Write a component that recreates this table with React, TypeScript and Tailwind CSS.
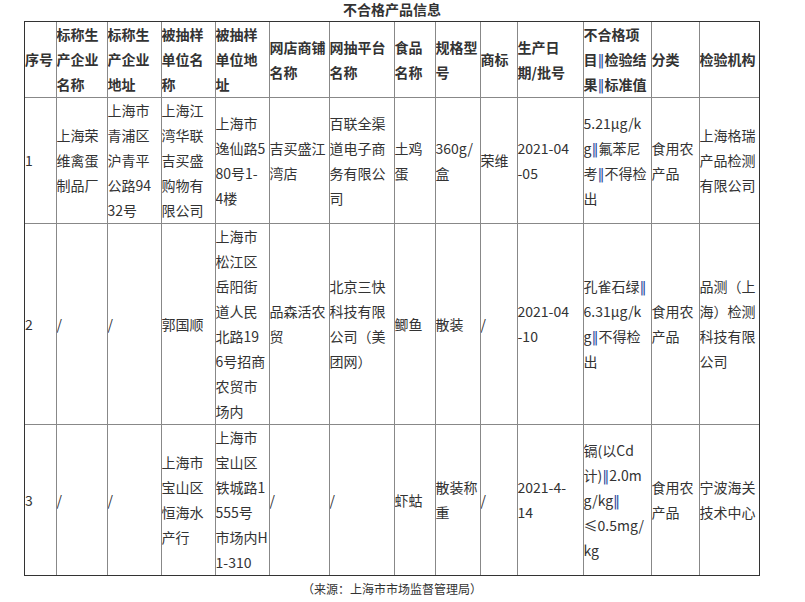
import React from "react";

// column widths include the 1px right border, last one is content only
const colWidths = [31, 51, 54, 54, 54, 60, 65, 41, 45, 37, 66, 68, 48, 60];

const header: string[][] = [
  ["序号"],
  ["标称生", "产企业", "名称"],
  ["标称生", "产企业", "地址"],
  ["被抽样", "单位名", "称"],
  ["被抽样", "单位地", "址"],
  ["网店商铺", "名称"],
  ["网抽平台", "名称"],
  ["食品", "名称"],
  ["规格型", "号"],
  ["商标"],
  ["生产日", "期/批号"],
  ["不合格项", "目‖检验结", "果‖标准值"],
  ["分类"],
  ["检验机构"],
];

const rows: string[][][] = [
  [
    ["1"],
    ["上海荣", "维禽蛋", "制品厂"],
    ["上海市", "青浦区", "沪青平", "公路94", "32号"],
    ["上海江", "湾华联", "吉买盛", "购物有", "限公司"],
    ["上海市", "逸仙路5", "80号1-", "4楼"],
    ["吉买盛江", "湾店"],
    ["百联全渠", "道电子商", "务有限公", "司"],
    ["土鸡", "蛋"],
    ["360g/", "盒"],
    ["荣维"],
    ["2021-04", "-05"],
    ["5.21μg/k", "g‖氟苯尼", "考‖不得检", "出"],
    ["食用农", "产品"],
    ["上海格瑞", "产品检测", "有限公司"],
  ],
  [
    ["2"],
    ["/"],
    ["/"],
    ["郭国顺"],
    ["上海市", "松江区", "岳阳街", "道人民", "北路19", "6号招商", "农贸市", "场内"],
    ["品森活农", "贸"],
    ["北京三快", "科技有限", "公司（美", "团网）"],
    ["鲫鱼"],
    ["散装"],
    ["/"],
    ["2021-04", "-10"],
    ["孔雀石绿‖", "6.31μg/k", "g‖不得检", "出"],
    ["食用农", "产品"],
    ["品测（上", "海）检测", "科技有限", "公司"],
  ],
  [
    ["3"],
    ["/"],
    ["/"],
    ["上海市", "宝山区", "恒海水", "产行"],
    ["上海市", "宝山区", "铁城路1", "555号", "市场内H", "1-310"],
    ["/"],
    ["/"],
    ["虾蛄"],
    ["散装称", "重"],
    ["/"],
    ["2021-4-", "14"],
    ["镉(以Cd", "计)‖2.0m", "g/kg‖", "≤0.5mg/", "kg"],
    ["食用农", "产品"],
    ["宁波海关", "技术中心"],
  ],
];

function Line({ text }: { text: string }) {
  const parts = text.split("‖");
  return (
    <span className="block h-[25px] overflow-visible whitespace-nowrap">
      {parts.map((p, i) => (
        <React.Fragment key={i}>
          {i > 0 && (
            <span
              className="text-[#2f4f9f] font-normal leading-none"
              style={{ fontFamily: '"DejaVu Sans", sans-serif' }}
            >
              ‖
            </span>
          )}
          {p}
        </React.Fragment>
      ))}
    </span>
  );
}

function Lines({ lines }: { lines: string[] }) {
  return (
    <>
      {lines.map((l, i) => (
        <Line key={i} text={l} />
      ))}
    </>
  );
}

export default function App() {
  const last = colWidths.length - 1;
  return (
    <div
      className="min-h-screen bg-white text-[#333]"
      style={{ fontFamily: '"Noto Sans CJK SC", "Noto Sans", sans-serif' }}
    >
      <div className="ml-[24px] w-[736px]">
        <div className="h-[21px] text-center text-[14px] font-bold leading-[18px]">
          不合格产品信息
        </div>
        <div className="border border-[#333]">
          <table className="w-[734px] table-fixed border-collapse text-[14px] leading-[25px]">
            <colgroup>
              {colWidths.map((w, i) => (
                <col key={i} style={{ width: w }} />
              ))}
            </colgroup>
            <thead>
              <tr>
                {header.map((h, i) => (
                  <th
                    key={i}
                    className={
                      "overflow-hidden p-0 text-left align-middle font-bold border-b border-[#888] " +
                      (i < last ? "border-r" : "")
                    }
                  >
                    <Lines lines={h} />
                  </th>
                ))}
              </tr>
            </thead>
            <tbody>
              {rows.map((r, ri) => (
                <tr key={ri}>
                  {r.map((c, ci) => (
                    <td
                      key={ci}
                      className={
                        "overflow-hidden p-0 text-left align-middle border-[#888] " +
                        (ci < last ? "border-r " : "") +
                        (ri < rows.length - 1 ? "border-b" : "")
                      }
                    >
                      <Lines lines={c} />
                    </td>
                  ))}
                </tr>
              ))}
            </tbody>
          </table>
        </div>
        <div className="text-center text-[12px] leading-[25px] text-[#333]">
          （来源：上海市市场监督管理局）
        </div>
      </div>
    </div>
  );
}
